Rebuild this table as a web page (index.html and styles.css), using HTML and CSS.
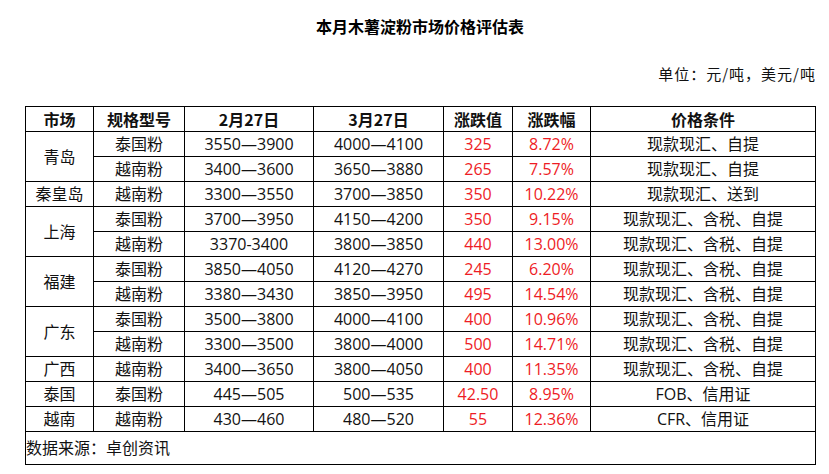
FILE: index.html
```html
<!DOCTYPE html>
<html lang="zh-CN">
<head>
<meta charset="utf-8">
<title>本月木薯淀粉市场价格评估表</title>
<link rel="stylesheet" href="styles.css">
</head>
<body>
<div class="page">
  <h1 class="title">本月木薯淀粉市场价格评估表</h1>
  <div class="unit">单位：元/吨，美元/吨</div>
  <table class="prices">
    <colgroup>
      <col class="c-market"><col class="c-spec"><col class="c-feb"><col class="c-mar"><col class="c-val"><col class="c-pct"><col class="c-cond">
    </colgroup>
    <thead>
      <tr><th>市场</th><th>规格型号</th><th>2月27日</th><th>3月27日</th><th>涨跌值</th><th>涨跌幅</th><th>价格条件</th></tr>
    </thead>
    <tbody>
      <tr><td rowspan="2">青岛</td><td>泰国粉</td><td>3550—3900</td><td>4000—4100</td><td class="up">325</td><td class="up">8.72%</td><td>现款现汇、自提</td></tr>
      <tr><td>越南粉</td><td>3400—3600</td><td>3650—3880</td><td class="up">265</td><td class="up">7.57%</td><td>现款现汇、自提</td></tr>
      <tr><td>秦皇岛</td><td>越南粉</td><td>3300—3550</td><td>3700—3850</td><td class="up">350</td><td class="up">10.22%</td><td>现款现汇、送到</td></tr>
      <tr><td rowspan="2">上海</td><td>泰国粉</td><td>3700—3950</td><td>4150—4200</td><td class="up">350</td><td class="up">9.15%</td><td>现款现汇、含税、自提</td></tr>
      <tr><td>越南粉</td><td>3370-3400</td><td>3800—3850</td><td class="up">440</td><td class="up">13.00%</td><td>现款现汇、含税、自提</td></tr>
      <tr><td rowspan="2">福建</td><td>泰国粉</td><td>3850—4050</td><td>4120—4270</td><td class="up">245</td><td class="up">6.20%</td><td>现款现汇、含税、自提</td></tr>
      <tr><td>越南粉</td><td>3380—3430</td><td>3850—3950</td><td class="up">495</td><td class="up">14.54%</td><td>现款现汇、含税、自提</td></tr>
      <tr><td rowspan="2">广东</td><td>泰国粉</td><td>3500—3800</td><td>4000—4100</td><td class="up">400</td><td class="up">10.96%</td><td>现款现汇、含税、自提</td></tr>
      <tr><td>越南粉</td><td>3300—3500</td><td>3800—4000</td><td class="up">500</td><td class="up">14.71%</td><td>现款现汇、含税、自提</td></tr>
      <tr><td>广西</td><td>越南粉</td><td>3400—3650</td><td>3800—4050</td><td class="up">400</td><td class="up">11.35%</td><td>现款现汇、含税、自提</td></tr>
      <tr><td>泰国</td><td>泰国粉</td><td>445—505</td><td>500—535</td><td class="up">42.50</td><td class="up">8.95%</td><td>FOB、信用证</td></tr>
      <tr><td>越南</td><td>越南粉</td><td>430—460</td><td>480—520</td><td class="up">55</td><td class="up">12.36%</td><td>CFR、信用证</td></tr>
    </tbody>
    <tfoot>
      <tr><td colspan="7" class="source">数据来源：卓创资讯</td></tr>
    </tfoot>
  </table>
</div>
</body>
</html>
```
FILE: styles.css
```css
html, body {
  margin: 0;
  padding: 0;
  background: #fff;
}
body {
  font-family: "Noto Sans CJK SC", "Noto Sans", sans-serif;
  color: #111;
}
.page {
  width: 790px;
  margin-left: 25px;
  padding-top: 15px;
}
.title {
  margin: 0;
  font-size: 16px;
  font-weight: 700;
  line-height: 22px;
  text-align: center;
  color: #000;
}
.unit {
  margin-top: 26px;
  font-size: 15px;
  line-height: 22px;
  text-align: right;
  letter-spacing: 1px;
  margin-right: -1px;
}
.prices {
  margin-top: 21px;
  width: 790px;
  border-collapse: collapse;
  table-layout: fixed;
  font-size: 16px;
}
.c-market { width: 68px; }
.c-spec { width: 91px; }
.c-feb { width: 129px; }
.c-mar { width: 130px; }
.c-val { width: 69px; }
.c-pct { width: 78px; }
.c-cond { width: 225px; }
.prices th,
.prices td {
  border: 1px solid #000;
  padding: 0;
  height: 24px;
  line-height: 22px;
  text-align: center;
  white-space: nowrap;
}
.prices td {
  font-family: "Open Sans", "Noto Sans CJK SC", sans-serif;
}
.prices th {
  font-weight: 700;
}
.prices td.up {
  color: #ee1c25;
}
.prices td.source {
  height: 32px;
  text-align: left;
}
```
